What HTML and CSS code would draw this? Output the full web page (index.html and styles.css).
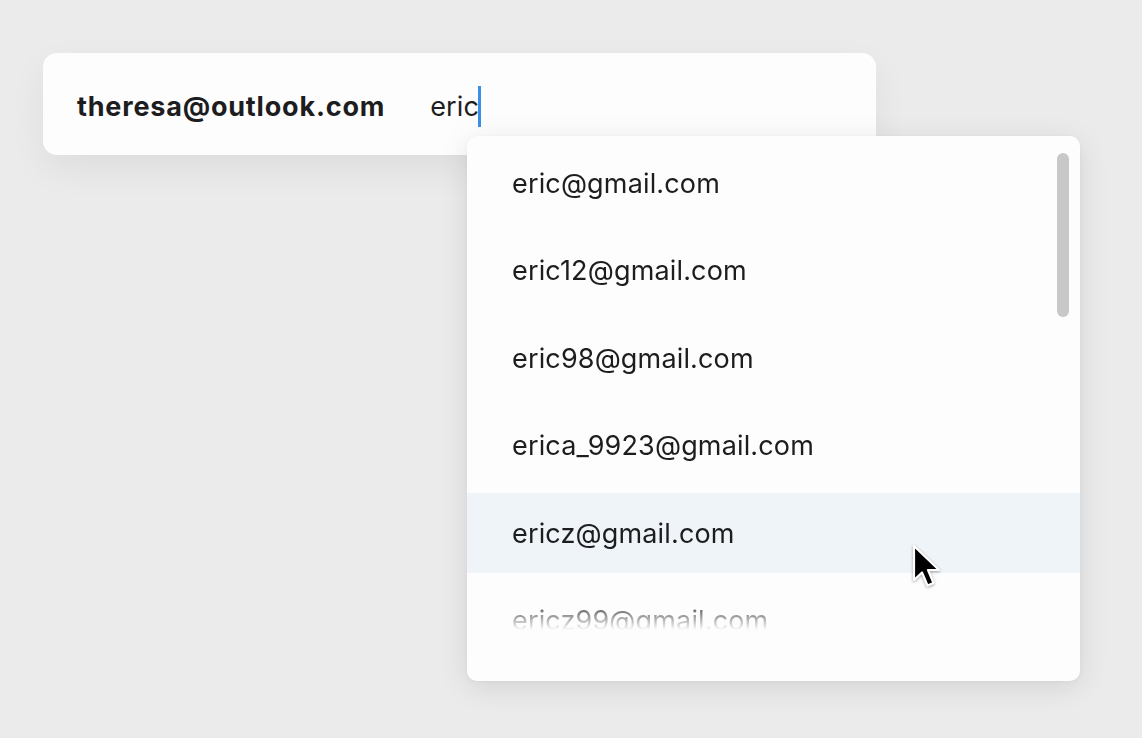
FILE: index.html
```html
<!DOCTYPE html>
<html lang="en">
<head>
<meta charset="utf-8">
<link rel="stylesheet" href="styles.css">
</head>
<body>
<div class="stage">
  <div class="field">
    <span class="from">theresa@outlook.com</span>
    <span class="query">eric<span class="caret"></span></span>
  </div>
  <div class="dropdown">
    <ul class="list">
      <li class="item">eric@gmail.com</li>
      <li class="item">eric12@gmail.com</li>
      <li class="item">eric98@gmail.com</li>
      <li class="item">erica_9923@gmail.com</li>
      <li class="item hover">ericz@gmail.com</li>
      <li class="item">ericz99@gmail.com</li>
    </ul>
    <div class="scrollbar"></div>
  </div>
  <svg class="pointer" width="30" height="48" viewBox="0 0 30 48">
    <path d="M2 2 L2 36 L10 28.5 L15.5 41.5 L21.5 39 L16 26 L27 26 Z" fill="#000" stroke="#fff" stroke-width="2.2" stroke-linejoin="round"/>
  </svg>
</div>
</body>
</html>
```
FILE: styles.css
```css
html, body {
  margin: 0;
  padding: 0;
  background: #ebebeb;
  font-family: Inter, "Open Sans", "Liberation Sans", sans-serif;
  color: #1d1d1f;
}
.stage {
  position: relative;
  width: 1142px;
  height: 738px;
  padding: 53px 0 0 43px;
  box-sizing: border-box;
}
.field {
  width: 833px;
  height: 102px;
  box-sizing: border-box;
  background: #fdfdfd;
  border-radius: 14px;
  box-shadow: 0 14px 36px rgba(0,0,0,0.06);
  display: flex;
  align-items: center;
  padding: 4px 0 0 34px;
  gap: 45px;
}
.from {
  font-weight: 700;
  font-size: 27px;
  letter-spacing: 0.8px;
}
.query {
  font-size: 27px;
  letter-spacing: 0.1px;
  display: inline-flex;
  align-items: center;
}
.caret {
  display: inline-block;
  width: 3px;
  height: 41px;
  background: #3b8fe5;
  margin-left: -1px;
  margin-top: 0;
}
.dropdown {
  position: absolute;
  left: 467px;
  top: 136px;
  width: 613px;
  height: 545px;
  background: #fdfdfd;
  border-radius: 10px;
  box-shadow: 0 6px 30px rgba(0,0,0,0.10), 0 1px 4px rgba(0,0,0,0.04);
  overflow: hidden;
}
.list {
  list-style: none;
  margin: 0;
  padding: 7px 0 0;
  height: 496px;
  overflow: hidden;
  -webkit-mask-image: linear-gradient(to bottom, #000 462px, transparent 494px);
  mask-image: linear-gradient(to bottom, #000 462px, transparent 494px);
  display: flex;
  flex-direction: column;
  gap: 7.5px;
}
.item {
  flex: none;
  height: 80px;
  display: flex;
  align-items: center;
  padding-left: 45px;
  font-size: 27px;
  letter-spacing: 0.15px;
}
.item.hover {
  background: #eff4f8;
}
.scrollbar {
  position: absolute;
  right: 11px;
  top: 17px;
  width: 12px;
  height: 164px;
  border-radius: 6px;
  background: #c8c8c8;
}
.pointer {
  position: absolute;
  left: 912px;
  top: 544px;
  filter: drop-shadow(0 1px 1.5px rgba(0,0,0,0.35));
}
```
